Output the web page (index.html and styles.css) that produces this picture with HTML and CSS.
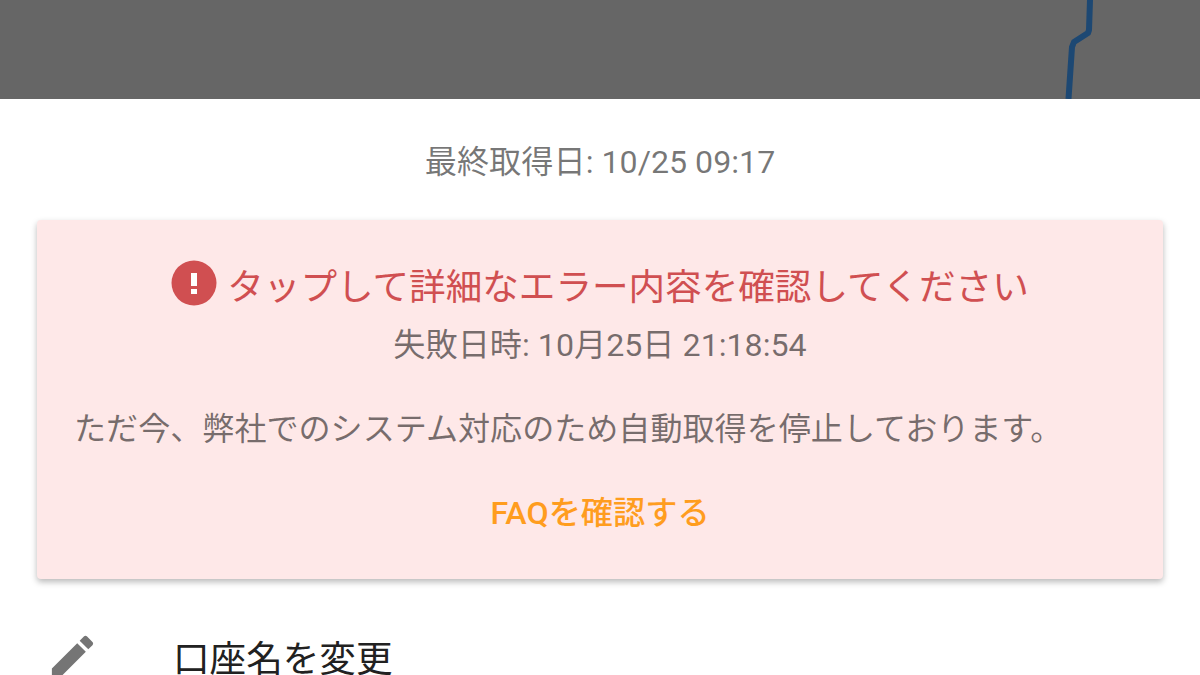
FILE: index.html
```html
<!DOCTYPE html>
<html lang="ja">
<head>
<meta charset="utf-8">
<title>口座</title>
<link rel="stylesheet" href="styles.css">
</head>
<body>
<div class="chart">
  <svg class="chart-line" width="1200" height="99" viewBox="0 0 1200 99"><path d="M1090 0 L1089 30 L1088 33 L1074 42 L1072 47 L1068.500 99" /></svg>
</div>
<p class="updated">最終取得日: 10/25 09:17</p>
<section class="card">
  <div class="card-title">
    <svg class="alert-icon" viewBox="0 0 46 46"><circle cx="23" cy="23" r="22.500"/><rect x="20" y="13" width="6" height="13"/><rect x="20" y="29" width="6" height="5"/></svg>
    <span>タップして詳細なエラー内容を確認してください</span>
  </div>
  <p class="card-date">失敗日時: 10月25日 21:18:54</p>
  <p class="card-body">ただ今、弊社でのシステム対応のため自動取得を停止しております。</p>
  <p class="card-link">FAQを確認する</p>
</section>
<div class="row">
  <svg class="edit-icon" viewBox="0 0 24 24"><path d="M3 17.250V21h3.750L17.810 9.940l-3.750-3.750L3 17.250zM20.710 7.040c.39-.39.39-1.020 0-1.410l-2.340-2.340c-.39-.39-1.020-.39-1.410 0l-1.830 1.830 3.750 3.750 1.830-1.830z"/></svg>
  <span class="row-label">口座名を変更</span>
</div>
</body>
</html>
```
FILE: styles.css
```css
html, body {
  margin: 0;
  padding: 0;
  height: 675px;
  overflow: hidden;
  background: #fff;
  font-family: Roboto, "Noto Sans CJK JP", sans-serif;
}
.chart {
  height: 99px;
  background: #666;
}
.chart-line {
  display: block;
}
.chart-line path {
  fill: none;
  stroke: #1d4873;
  stroke-width: 6;
  stroke-linejoin: round;
}
.updated {
  margin: 0;
  padding-top: 42px;
  height: 79px;
  line-height: 42px;
  font-size: 32.2px;
  color: rgba(0, 0, 0, 0.54);
  text-align: center;
}
.card {
  margin: 0 37px;
  height: 359px;
  background: #fee8e8;
  border-radius: 4px;
  box-shadow: 0 3px 6px rgba(0, 0, 0, 0.28);
  box-sizing: border-box;
  padding-top: 41px;
}
.card-title {
  display: flex;
  justify-content: center;
  align-items: center;
  gap: 10px;
  height: 46px;
  font-size: 36.6px;
  color: #d04f51;
}
.alert-icon {
  width: 46px;
  height: 46px;
  margin-bottom: 3px;
  flex: none;
}
.alert-icon circle { fill: #d04f51; }
.alert-icon rect { fill: #fff; }
.card-date {
  margin: 15px 0 0;
  line-height: 46px;
  font-size: 32.2px;
  color: rgba(0, 0, 0, 0.54);
  text-align: center;
}
.card-body {
  margin: 38px 0 0 37px;
  line-height: 46px;
  font-size: 32.1px;
  color: rgba(0, 0, 0, 0.54);
}
.card-link {
  margin: 38px 0 0;
  line-height: 46px;
  font-size: 32.2px;
  font-weight: 500;
  color: #ff9d1e;
  text-align: center;
}
.row {
  display: flex;
  align-items: flex-start;
  padding: 51px 0 0 45px;
}
.edit-icon {
  width: 55px;
  height: 55px;
  margin-top: -1px;
  flex: none;
  fill: #757575;
}
.row-label {
  margin-left: 73px;
  font-size: 36.6px;
  line-height: 60px;
  color: #212121;
}
```
